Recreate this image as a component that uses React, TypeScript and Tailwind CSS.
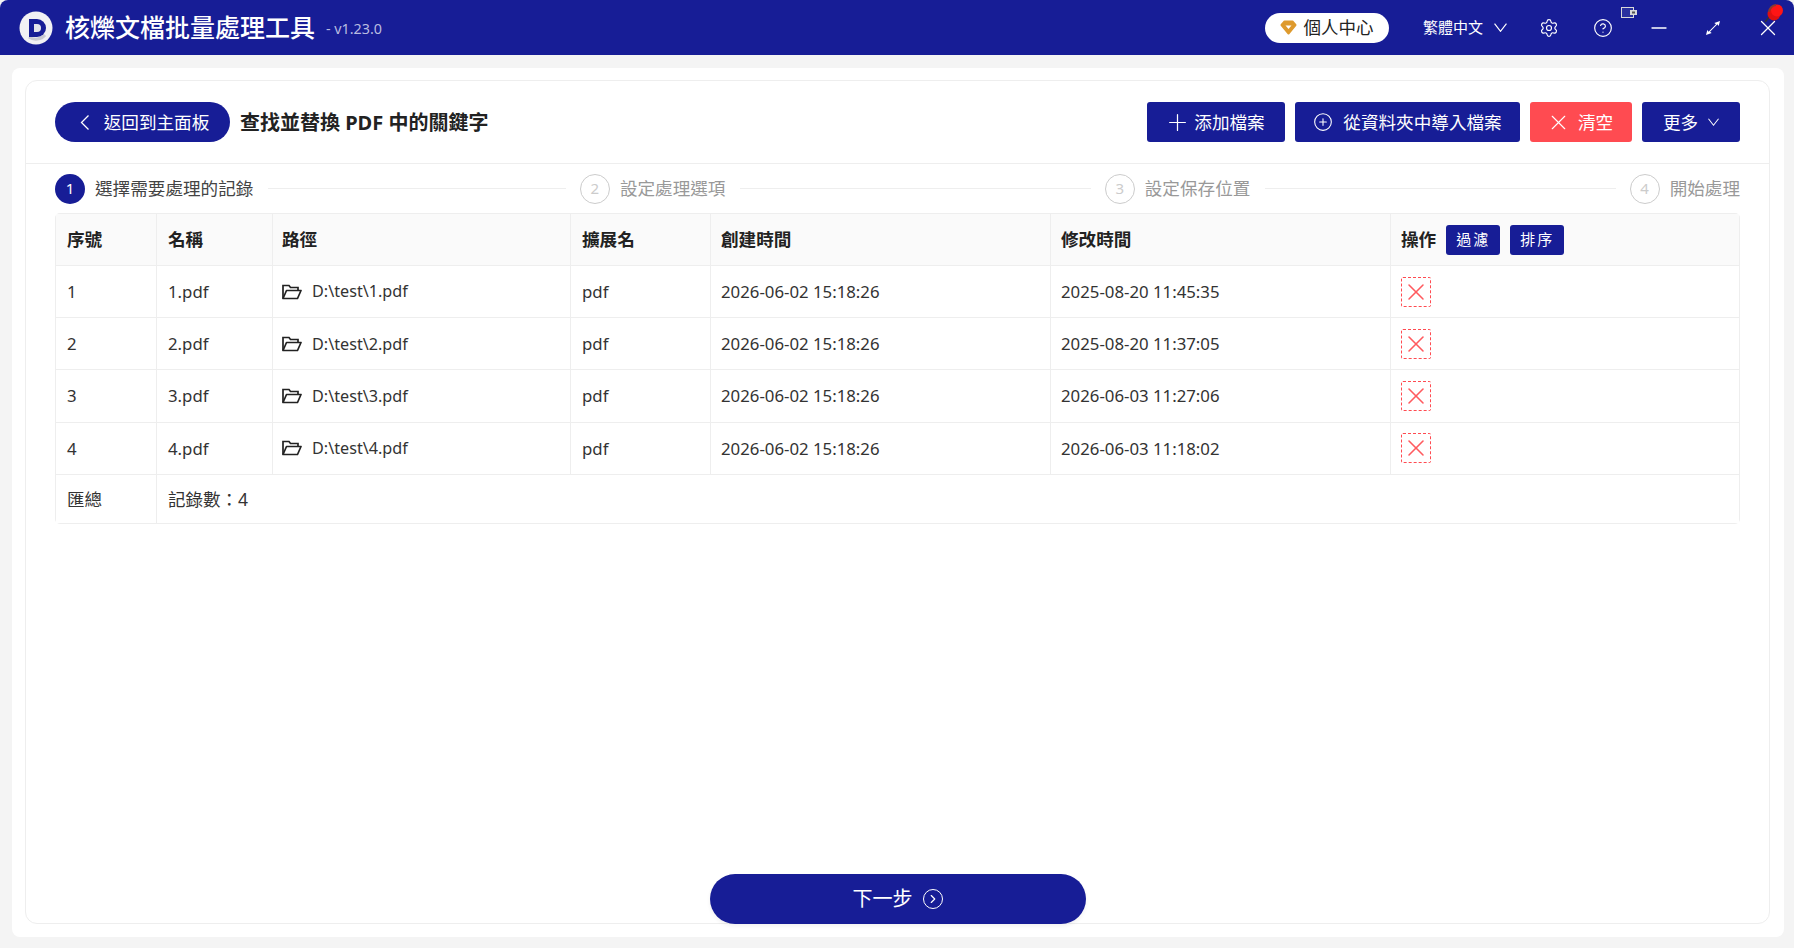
import { ChevronRight, CircleHelp, CirclePlus, Minus, Plus, Settings, X } from 'lucide-react'

const navy = 'bg-[#171d96]'

const rows = [
  { id: 1, modified: '2025-08-20 11:45:35' },
  { id: 2, modified: '2025-08-20 11:37:05' },
  { id: 3, modified: '2026-06-03 11:27:06' },
  { id: 4, modified: '2026-06-03 11:18:02' },
]

function Logo() {
  return (
    <svg width="34" height="34" viewBox="0 0 34 34" className="shrink-0">
      <circle cx="17" cy="17" r="16.500" fill="#f1f1f4" />
      <path d="M26 24a12 12 0 0 1-16 2" stroke="#c9c9d2" strokeWidth="3" fill="none" />
      <path d="M10 8h8a9 9 0 0 1 0 18h-8z" fill="#171d96" />
      <path d="M15 13h3a4 4 0 0 1 0 8h-3z" fill="#e4e4ea" />
    </svg>
  )
}

function Gem() {
  return (
    <svg width="17" height="15" viewBox="0 0 17 15" className="shrink-0">
      <path d="M4.500 1.500h8l3 3.500-7 8.500-7-8.500z" fill="#de9a2d" stroke="#de9a2d" strokeWidth="2" strokeLinejoin="round" />
      <path d="M5.500 5.500h6l-3 3.500z" fill="#fff" />
    </svg>
  )
}

function FolderIcon() {
  return (
    <svg width="20" height="16" viewBox="0 0 20 16" fill="none" stroke="#222" strokeWidth="1.700" className="shrink-0">
      <path d="M1 14.500V1.500h6l1.500 2H16v3" />
      <path d="M1 14.500h14.500L19 6.500H4.500z" strokeLinejoin="round" />
    </svg>
  )
}

function Caret({ w, h }: { w: number; h: number }) {
  return (
    <svg width={w} height={h} viewBox="0 0 12 8" fill="none" stroke="currentColor" strokeWidth="1.100" className="shrink-0">
      <path d="M.5.500 6 7.500 11.500.500" />
    </svg>
  )
}

function ToolbarButton({ icon, label, color = navy, wide }: { icon: React.ReactNode; label: string; color?: string; wide: string }) {
  return (
    <button className={`${color} ${wide} h-10 rounded-[3px] text-white text-[17.600px] flex items-center justify-center gap-[10px]`}>
      {icon}
      <span className="pt-px">{label}</span>
    </button>
  )
}

function Step({ n, label, active, last }: { n: number; label: string; active?: boolean; last?: boolean }) {
  return (
    <div className={last ? 'flex items-center gap-[10px] shrink-0' : 'flex-1 basis-0 flex items-center gap-[10px]'}>
      <span
        className={
          active
            ? `${navy} w-[30px] h-[30px] rounded-full text-white text-[15px] flex items-center justify-center shrink-0`
            : 'w-[30px] h-[30px] rounded-full border border-[#ccc] text-[#ccc] text-[15px] flex items-center justify-center shrink-0'
        }
      >
        {n}
      </span>
      <span className={active ? 'text-[17.600px] text-[#444] shrink-0' : 'text-[17.600px] text-[#999] shrink-0'}>{label}</span>
      {!last && <div className="flex-1 h-px bg-[#eeeeee] ml-[5px] mr-[9px]" />}
    </div>
  )
}

const th = 'border border-[#eeeeee] px-[10px] text-left font-bold text-[#222] text-[17.600px]'
const td = 'border border-[#eeeeee] px-[10px] text-[#333] text-[16.800px]'

export default function App() {
  return (
    <div
      className="w-[1794px] h-[948px] flex flex-col bg-[#f4f4f4] overflow-hidden"
      style={{ fontFamily: '"Noto Sans", "Noto Sans CJK TC", sans-serif' }}
    >
      {/* title bar */}
      <header className={`${navy} relative h-[55px] shrink-0 rounded-t-lg flex items-center pl-[19px] text-white`}>
        <Logo />
        <h1 className="ml-[12px] text-[25px] leading-none font-medium">核爍文檔批量處理工具</h1>
        <span className="ml-[11px] mt-[3px] text-[14.300px] text-[#b9bce0]">- v1.23.0</span>

        <button className="ml-auto w-[124px] h-[30px] rounded-full bg-white text-[#222] text-[17.500px] flex items-center justify-center gap-[6px]">
          <Gem />
          個人中心
        </button>
        <div className="ml-[34px] flex items-center gap-[11px] text-[15px]">
          繁體中文
          <Caret w={13} h={9} />
        </div>
        <Settings className="ml-[32px]" size={20} strokeWidth={1.400} />
        <CircleHelp className="ml-[34px]" size={20} strokeWidth={1.400} />
        <Minus className="ml-[34px]" size={24} strokeWidth={1.300} />
        <svg className="ml-[33px]" width="18" height="18" viewBox="0 0 18 18" fill="#fff">
          <path d="M16 2l-1.300 5-1.300-1.700-7.400 7.400L7.700 14l-5.700 2 1.300-5 1.300 1.700 7.400-7.400L10.300 4z" />
        </svg>
        <X className="ml-[33px] mr-[13px]" size={26} strokeWidth={1.200} />

        {/* tray icon and pin sitting over the bar */}
        <svg className="absolute left-[1621px] top-[7px]" width="17" height="11" viewBox="0 0 17 11">
          <rect x="0.500" y="0.500" width="12" height="10" fill="#2a319f" stroke="#d9d9d9" />
          <rect x="9" y="3" width="7" height="5" fill="#d9d9d9" />
          <rect x="11" y="4.500" width="3" height="2" fill="#555" />
        </svg>
        <svg className="absolute left-[1764px] top-[3px]" width="20" height="20" viewBox="0 0 20 20">
          <path d="M1 19l4-5" stroke="#333" strokeWidth="1.500" />
          <circle cx="10" cy="11" r="6.500" fill="#e01010" />
          <circle cx="13" cy="7.500" r="6" fill="#ff1515" />
          <path d="M5 9a7.500 7.500 0 0 1 7-7" stroke="#8a3a30" strokeWidth="2" fill="none" />
        </svg>
      </header>

      {/* page */}
      <main className="flex-1 min-h-0 pt-[13px] pb-[11px] pl-[12px] pr-[10px] flex">
        <div className="flex-1 bg-white rounded-lg pt-[12px] pb-[13px] pl-[13px] pr-[14px] flex">
          <div className="flex-1 border border-[#eeeeee] rounded-xl flex flex-col">
            <div className="h-[83px] shrink-0 border-b border-[#eeeeee] px-[29px] flex items-center">
              <button className={`${navy} w-[175px] h-10 pl-[4px] rounded-full text-white text-[17.600px] flex items-center justify-center gap-[14px]`}>
                <svg width="10" height="15" viewBox="0 0 10 15" fill="none" stroke="currentColor" strokeWidth="1.300">
                  <path d="M8.500.500 1.500 7.500l7 7" />
                </svg>
                <span className="pt-px">返回到主面板</span>
              </button>
              <h2 className="ml-[10px] mt-[2px] text-[20px] font-bold text-[#222]">查找並替換 PDF 中的關鍵字</h2>
              <div className="ml-auto flex gap-[10px]">
                <ToolbarButton wide="w-[138px]" icon={<Plus size={27} strokeWidth={1.100} className="-mx-[5px] translate-x-[2px]" />} label="添加檔案" />
                <ToolbarButton wide="w-[225px]" icon={<CirclePlus size={20} strokeWidth={1.300} />} label="從資料夾中導入檔案" />
                <ToolbarButton wide="w-[102px]" color="bg-[#ff4b51]" icon={<X size={25} strokeWidth={1.100} className="-mx-[3px]" />} label="清空" />
                <ToolbarButton wide="w-[98px]" icon={<span className="order-last"><Caret w={11} h={8} /></span>} label="更多" />
              </div>
            </div>

            <div className="h-[49px] shrink-0 px-[29px] flex items-center gap-[5px]">
              <Step n={1} label="選擇需要處理的記錄" active />
              <Step n={2} label="設定處理選項" />
              <Step n={3} label="設定保存位置" />
              <Step n={4} label="開始處理" last />
            </div>

            <div className="px-[29px]">
              <div className="rounded-[5px] overflow-hidden">
                <table className="w-[1685px] table-fixed border-collapse">
                  <colgroup>
                    <col className="w-[101px]" />
                    <col className="w-[116px]" />
                    <col className="w-[298px]" />
                    <col className="w-[140px]" />
                    <col className="w-[340px]" />
                    <col className="w-[340px]" />
                    <col />
                  </colgroup>
                  <thead>
                    <tr className="h-[52px] bg-[#fafafa]">
                      <th className={`${th} pl-[11px]`}>序號</th>
                      <th className={`${th} pl-[11px]`}>名稱</th>
                      <th className={`${th} pl-[9px]`}>路徑</th>
                      <th className={`${th} pl-[11px]`}>擴展名</th>
                      <th className={th}>創建時間</th>
                      <th className={th}>修改時間</th>
                      <th className={th}>
                        <div className="flex items-center gap-[10px]">
                          操作
                          <button className={`${navy} w-[54px] h-[30px] rounded-[3px] text-white text-[15px] font-normal tracking-[2px]`}>過濾</button>
                          <button className={`${navy} w-[54px] h-[30px] rounded-[3px] text-white text-[15px] font-normal tracking-[2px]`}>排序</button>
                        </div>
                      </th>
                    </tr>
                  </thead>
                  <tbody>
                    {rows.map((r) => (
                      <tr key={r.id} className="h-[52.200px]">
                        <td className={`${td} pl-[11px]`}>{r.id}</td>
                        <td className={`${td} pl-[11px]`}>{r.id}.pdf</td>
                        <td className={`${td} pl-[9px]`}>
                          <div className="flex items-center gap-[10px]">
                            <FolderIcon />
                            <span className="text-[16.200px]">{`D:\\test\\${r.id}.pdf`}</span>
                          </div>
                        </td>
                        <td className={`${td} pl-[11px]`}>pdf</td>
                        <td className={td}>2026-06-02 15:18:26</td>
                        <td className={td}>{r.modified}</td>
                        <td className={td}>
                          <button className="w-[30px] h-[30px] border border-dashed border-[#ff4b51] rounded-[2px] flex items-center justify-center">
                            <X size={28} strokeWidth={1.300} className="text-[#ff5a5f] shrink-0" />
                          </button>
                        </td>
                      </tr>
                    ))}
                    <tr className="h-[49px]">
                      <td className={`${td} pl-[11px] text-[17.500px]`}>匯總</td>
                      <td className={`${td} pl-[11px] text-[17.500px]`} colSpan={6}>記錄數：4</td>
                    </tr>
                  </tbody>
                </table>
              </div>
            </div>

            <button className={`${navy} mt-auto -mb-px self-center w-[376px] h-[50px] rounded-full shadow-[0_2px_4px_rgba(0,0,0,0.06)] text-white text-[20px] flex items-center justify-center gap-[10px]`}>
              下一步
              <span className="w-5 h-5 rounded-full border-[1.500px] border-white flex items-center justify-center">
                <ChevronRight size={14} strokeWidth={2} />
              </span>
            </button>
          </div>
        </div>
      </main>
    </div>
  )
}
